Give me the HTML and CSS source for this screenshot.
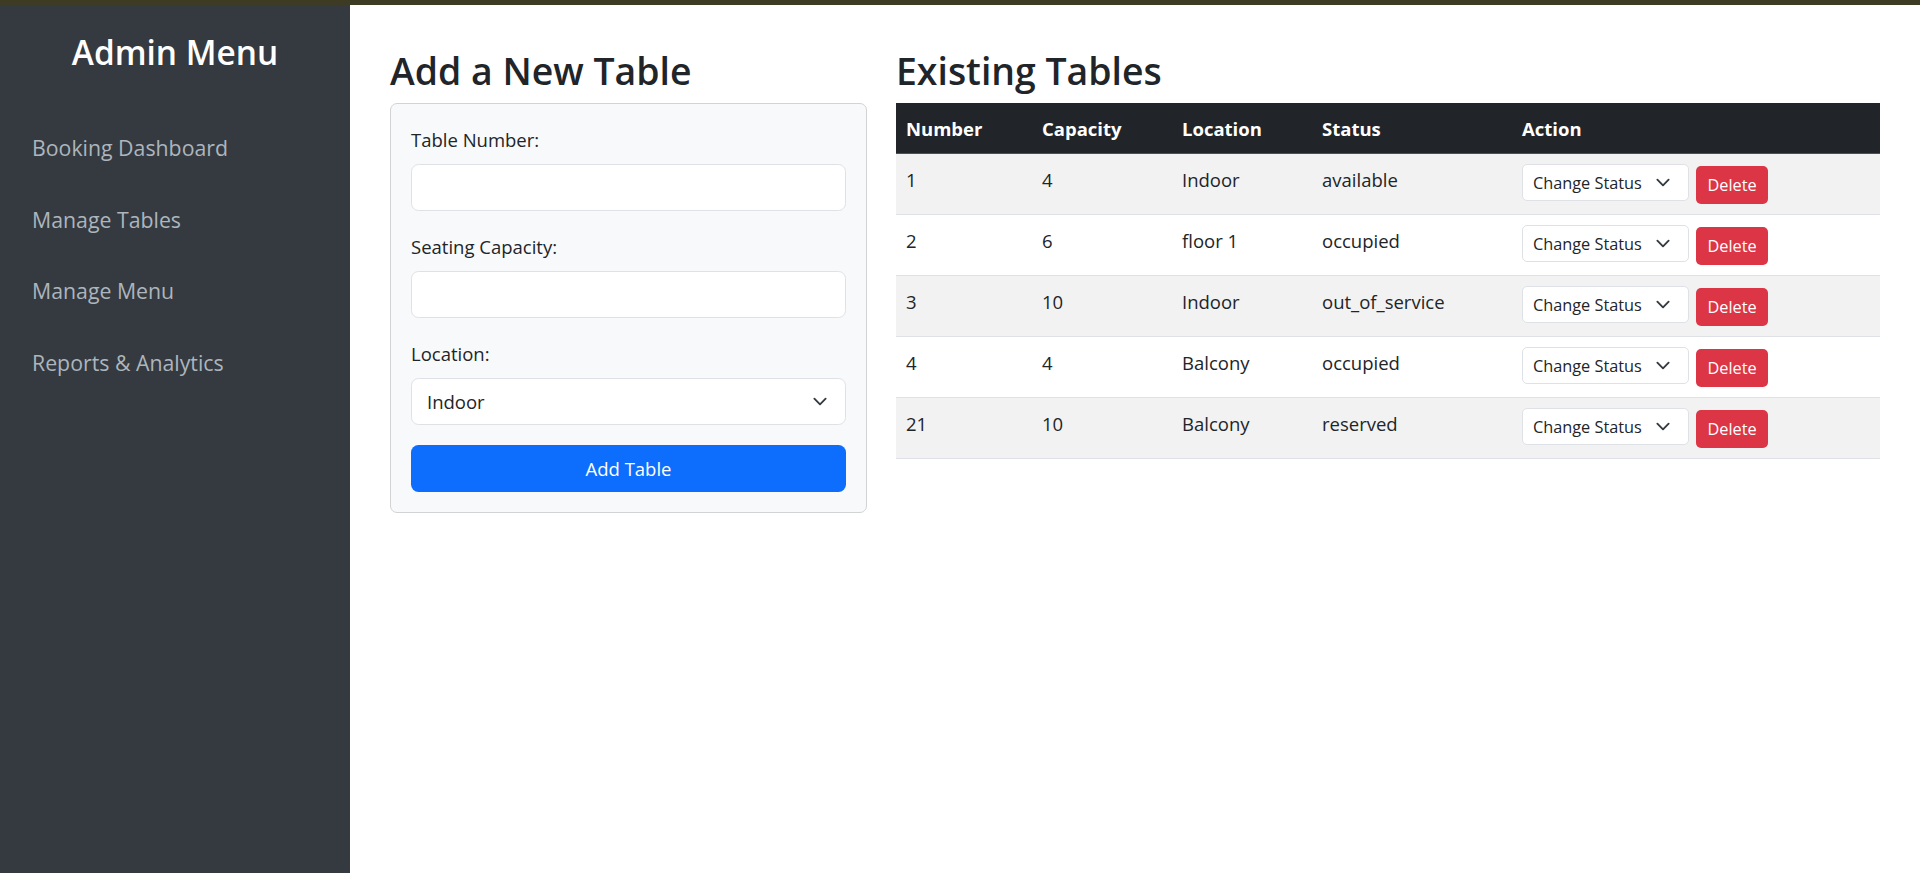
FILE: index.html
```html
<!DOCTYPE html>
<html lang="en">
<head>
<meta charset="utf-8">
<title>Manage Tables</title>
<link rel="stylesheet" href="styles.css">
</head>
<body>
<div class="topbar"></div>
<div class="layout">
  <aside class="sidebar">
    <h3 class="sidebar-title">Admin Menu</h3>
    <nav class="side-nav">
      <a class="side-link" href="#">Booking Dashboard</a>
      <a class="side-link" href="#">Manage Tables</a>
      <a class="side-link" href="#">Manage Menu</a>
      <a class="side-link" href="#">Reports &amp; Analytics</a>
    </nav>
  </aside>
  <main class="main">
    <section class="add-col">
      <h2 class="section-title">Add a New Table</h2>
      <form class="card">
        <div class="group">
          <label class="label">Table Number:</label>
          <div class="input"></div>
        </div>
        <div class="group">
          <label class="label">Seating Capacity:</label>
          <div class="input"></div>
        </div>
        <div class="group">
          <label class="label">Location:</label>
          <div class="input select">
            <span>Indoor</span>
            <svg class="chev" width="20" height="15" viewBox="0 0 16 16"><path d="m2 5 6 6 6-6" fill="none" stroke="#343a40" stroke-width="2" stroke-linecap="round" stroke-linejoin="round"/></svg>
          </div>
        </div>
        <div class="btn-primary">Add Table</div>
      </form>
    </section>
    <section class="list-col">
      <h2 class="section-title">Existing Tables</h2>
      <table class="table">
        <colgroup>
          <col class="c1"><col class="c2"><col class="c3"><col class="c4"><col class="c5">
        </colgroup>
        <thead>
          <tr><th>Number</th><th>Capacity</th><th>Location</th><th>Status</th><th>Action</th></tr>
        </thead>
        <tbody>
          <tr><td>1</td><td>4</td><td>Indoor</td><td>available</td><td><div class="actions"><div class="sel-sm"><span>Change Status</span><svg class="chev-sm" width="20" height="15" viewBox="0 0 16 16"><path d="m2 5 6 6 6-6" fill="none" stroke="#343a40" stroke-width="2" stroke-linecap="round" stroke-linejoin="round"/></svg></div><div class="btn-del">Delete</div></div></td></tr>
          <tr><td>2</td><td>6</td><td>floor 1</td><td>occupied</td><td><div class="actions"><div class="sel-sm"><span>Change Status</span><svg class="chev-sm" width="20" height="15" viewBox="0 0 16 16"><path d="m2 5 6 6 6-6" fill="none" stroke="#343a40" stroke-width="2" stroke-linecap="round" stroke-linejoin="round"/></svg></div><div class="btn-del">Delete</div></div></td></tr>
          <tr><td>3</td><td>10</td><td>Indoor</td><td>out_of_service</td><td><div class="actions"><div class="sel-sm"><span>Change Status</span><svg class="chev-sm" width="20" height="15" viewBox="0 0 16 16"><path d="m2 5 6 6 6-6" fill="none" stroke="#343a40" stroke-width="2" stroke-linecap="round" stroke-linejoin="round"/></svg></div><div class="btn-del">Delete</div></div></td></tr>
          <tr><td>4</td><td>4</td><td>Balcony</td><td>occupied</td><td><div class="actions"><div class="sel-sm"><span>Change Status</span><svg class="chev-sm" width="20" height="15" viewBox="0 0 16 16"><path d="m2 5 6 6 6-6" fill="none" stroke="#343a40" stroke-width="2" stroke-linecap="round" stroke-linejoin="round"/></svg></div><div class="btn-del">Delete</div></div></td></tr>
          <tr><td>21</td><td>10</td><td>Balcony</td><td>reserved</td><td><div class="actions"><div class="sel-sm"><span>Change Status</span><svg class="chev-sm" width="20" height="15" viewBox="0 0 16 16"><path d="m2 5 6 6 6-6" fill="none" stroke="#343a40" stroke-width="2" stroke-linecap="round" stroke-linejoin="round"/></svg></div><div class="btn-del">Delete</div></div></td></tr>
        </tbody>
      </table>
    </section>
  </main>
</div>
</body>
</html>
```

FILE: styles.css
```css
* { box-sizing: border-box; }
html, body { margin: 0; padding: 0; }
body {
  font-family: "Open Sans", "Noto Sans", "Liberation Sans", sans-serif;
  color: #212529;
  background: #fff;
  font-size: 18.5px;
  line-height: 30px;
}
.topbar { height: 5px; background: #3d3b24; }
.layout { display: flex; min-height: 868px; }

.sidebar {
  width: 350px;
  flex: 0 0 350px;
  background: #343a40;
  padding-top: 27px;
}
.sidebar-title {
  margin: 0 0 40px;
  text-align: center;
  color: #fff;
  font-size: 33.4px;
  font-weight: 600;
  line-height: 40px;
}
.side-nav { display: flex; flex-direction: column; }
.side-link {
  display: block;
  padding: 20px 32px;
  font-size: 21.3px;
  line-height: 31.6px;
  color: #adb5bd;
  text-decoration: none;
}

.main {
  flex: 1;
  display: grid;
  grid-template-columns: 477px 1fr;
  column-gap: 29px;
  align-items: start;
  padding: 42px 40px 0;
}
.section-title {
  margin: 0 0 8px;
  font-size: 37.4px;
  font-weight: 600;
  line-height: 48px;
  color: #212529;
}

.card {
  margin: 0;
  background: #f8f9fa;
  border: 1px solid #d2d3d4;
  border-radius: 7px;
  padding: 20px;
}
.group { margin-bottom: 20px; }
.label { display: block; margin-bottom: 10px; padding-top: 1px; height: 30px; }
.input {
  height: 47px;
  background: #fff;
  border: 1px solid #dee2e6;
  border-radius: 7.5px;
}
.select {
  display: flex;
  align-items: center;
  justify-content: space-between;
  padding: 0 15px 0 15px;
  color: #212529;
}
.chev { display: block; }
.btn-primary {
  height: 47px;
  background: #0d6efd;
  color: #fff;
  border-radius: 7.5px;
  display: flex;
  align-items: center;
  justify-content: center;
}

.table {
  width: 100%;
  border-collapse: collapse;
  table-layout: fixed;
}
.c1 { width: 136px; }
.c2 { width: 140px; }
.c3 { width: 140px; }
.c4 { width: 200px; }
.c5 { width: 368px; }
.table th, .table td {
  padding: 11px 10px 9px;
  text-align: left;
  vertical-align: top;
  line-height: 30px;
}
.table th {
  background: #212529;
  color: #fff;
  font-weight: 700;
  border-bottom: 1px solid #4d5154;
}
.table td { border-bottom: 1px solid #dee2e6; }
.table tbody tr:nth-child(odd) td { background: #f2f2f2; }

.actions { display: flex; align-items: flex-start; gap: 7px; margin-top: -1px; min-height: 41px; }
.sel-sm {
  width: 167px;
  height: 37px;
  background: #fff;
  border: 1px solid #dee2e6;
  border-radius: 5px;
  display: flex;
  align-items: center;
  justify-content: space-between;
  padding: 0 15px 0 10px;
  font-size: 16.3px;
  line-height: 26px;
}
.chev-sm { display: block; }
.btn-del {
  margin-top: 2px;
  width: 72px;
  height: 38px;
  background: #dc3545;
  color: #fff;
  border-radius: 5px;
  font-size: 16.3px;
  line-height: 26px;
  display: flex;
  align-items: center;
  justify-content: center;
}
```
